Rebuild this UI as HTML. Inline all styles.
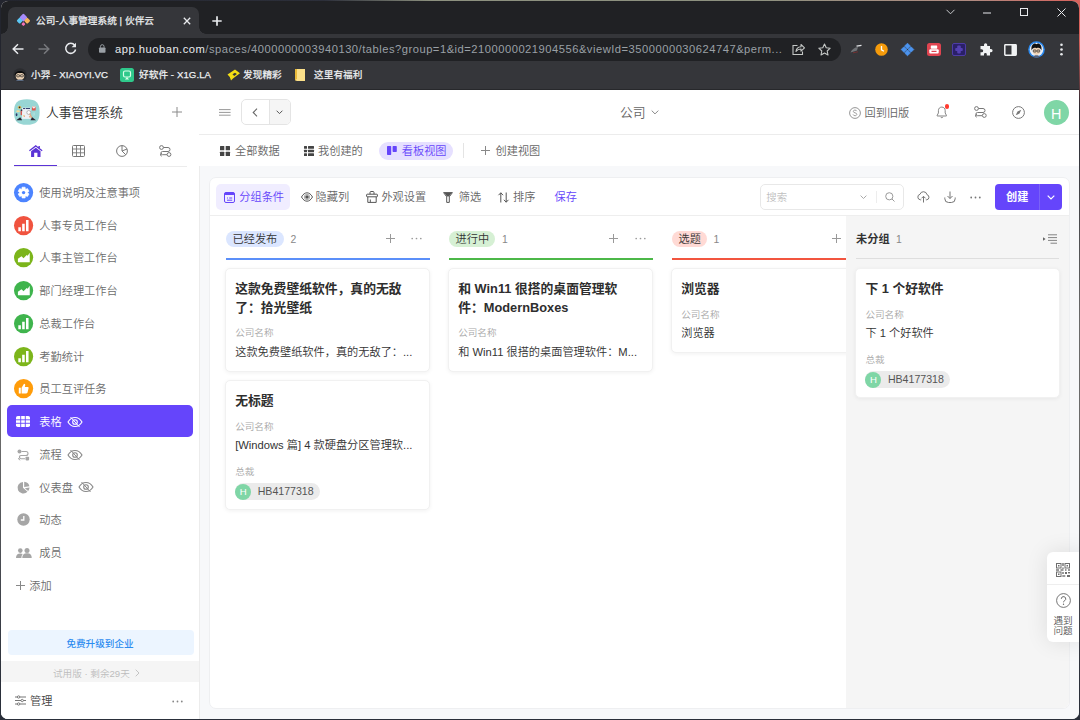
<!DOCTYPE html>
<html lang="zh-CN">
<head>
<meta charset="utf-8">
<title>公司-人事管理系统 | 伙伴云</title>
<style>
*{box-sizing:border-box;margin:0;padding:0}
html,body{width:1080px;height:720px;overflow:hidden;background:#3a3d47}
body{background:radial-gradient(circle at 100% 0,#d9625c 0,#d9625c 40px,rgba(217,98,92,0) 110px),linear-gradient(180deg,#23252e 0,#23252e 14%,#6b6b6b 45%,#6b6b6b 60%,#2a2f3a 95%)}
body{font-family:"Liberation Sans","Noto Sans CJK SC",sans-serif;color:#333;position:relative;font-weight:350}
.abs{position:absolute}
.t{position:absolute;white-space:nowrap;line-height:1;margin-top:1px}
svg{position:absolute;overflow:visible}
/* ---------- window ---------- */
#win{position:absolute;left:1px;top:1px;width:1078px;height:718px;border-radius:7px;overflow:hidden;background:#fff}
/* ---------- chrome ---------- */
#frame{position:absolute;left:0;top:0;width:1079px;height:33px;background:#202124}
#tab{position:absolute;left:7px;top:6px;width:191px;height:27px;background:#35363a;border-radius:7px 7px 0 0}
#tab:before,#tab:after{content:"";position:absolute;bottom:0;width:7px;height:7px;background:radial-gradient(circle at 0 0,rgba(0,0,0,0) 6.5px,#35363a 7px)}
#tab:before{left:-7px}
#tab:after{right:-7px;transform:scaleX(-1)}
#tbar{position:absolute;left:0;top:33px;width:1079px;height:56px;background:#35363a;z-index:5;border-bottom:1px solid #27282b}
#url{position:absolute;left:87px;top:3.500px;width:753px;height:23px;border-radius:12px;background:#202124}
.ct{color:#eef0f2;font-size:9.6px;margin-top:0;letter-spacing:.1px;font-weight:400;-webkit-text-stroke:.25px #eef0f2}
/* ---------- page ---------- */
#page{position:absolute;left:0;top:88px;width:1079px;height:630px;background:#f7f8fa}
#side{position:absolute;left:0;top:0;width:199px;height:630px;background:#fff;border-right:1px solid #ececec}
#head{position:absolute;left:198px;top:0;width:881px;height:46px;background:#fff;border-bottom:1px solid #ececec}
#views{position:absolute;left:198px;top:46px;width:881px;height:31px;background:#fff}
#panel{position:absolute;left:208px;top:88px;width:860.500px;height:532px;background:#fff;border:1px solid #eeeff1;border-radius:7px;overflow:hidden}
.si{color:#6c6c6c;font-size:11.2px}

.tb{font-size:11.200px;color:#666}
.card{position:absolute;background:#fff;border:1px solid #f1f1f1;border-radius:5px;box-shadow:0 1px 4px rgba(0,0,0,.06)}
.ttl{font-size:12.800px;font-weight:700;color:#2e2e2e}
.lab{font-size:9.600px;color:#a8a8a8}
.val{font-size:11.200px;color:#333}
.chip{position:absolute;height:17.400px;border-radius:8.700px;background:#ebebeb;padding-right:6px;white-space:nowrap;line-height:17px;font-size:0}
.chip i{display:inline-block;vertical-align:top;margin-top:.7px;width:16px;height:16px;border-radius:50%;background:#7fd6a6;color:#fff;font-style:normal;font-size:9.600px;line-height:16px;text-align:center;font-weight:400}
.chip b{display:inline-block;vertical-align:top;font-weight:400;font-size:10.600px;color:#555;margin-left:6.500px;line-height:17.500px}
</style>
</head>
<body>
<div class="abs" style="left:0;top:0;width:1080px;height:1px;background:linear-gradient(90deg,#23252e 0,#2c2f3a 30%,#8d917f 40%,#8d917f 70%,#b08a80 90%,#d9625c 100%)"></div>
<div id="win">
  <!-- ======= BROWSER CHROME ======= -->
  <div id="frame">
    <div id="tab">
      <svg style="left:9px;top:7px" width="13" height="13" viewBox="0 0 13 13">
        <rect x="3.4" y="0.6" width="6" height="6" rx="1.3" transform="rotate(45 6.4 3.6)" fill="#a78bfa"/>
        <rect x="0.4" y="4.4" width="4.6" height="4.6" rx="1.1" transform="rotate(45 2.7 6.7)" fill="#5cc8f5"/>
        <rect x="7.9" y="4.4" width="4.6" height="4.6" rx="1.1" transform="rotate(45 10.2 6.7)" fill="#f7b45c"/>
        <rect x="4.9" y="8.6" width="3" height="3" rx="0.9" transform="rotate(45 6.4 10.1)" fill="#f472b6"/>
      </svg>
      <span class="t ct" style="left:28px;top:9px">公司-人事管理系统 | 伙伴云</span>
      <svg style="left:175px;top:10px" width="8" height="8" viewBox="0 0 8 8"><path d="M.8.8l6.4 6.4M7.2.8L.8 7.2" stroke="#e8eaed" stroke-width="1.3" fill="none"/></svg>
    </div>
    <svg style="left:211px;top:15px" width="10" height="10" viewBox="0 0 10 10"><path d="M5 .3v9.400M.3 5h9.400" stroke="#e8eaed" stroke-width="1.700" fill="none"/></svg>
    <svg style="left:945px;top:8px" width="9" height="6" viewBox="0 0 9 6"><path d="M.5.8l4 4 4-4" stroke="#c8cacd" stroke-width="1" fill="none"/></svg>
    <svg style="left:982px;top:11px" width="8" height="2" viewBox="0 0 8 2"><path d="M0 1h8" stroke="#e8eaed" stroke-width="1.1"/></svg>
    <svg style="left:1019px;top:7px" width="8" height="8" viewBox="0 0 8 8"><rect x=".5" y=".5" width="7" height="7" stroke="#e8eaed" stroke-width="1" fill="none"/></svg>
    <svg style="left:1056px;top:7px" width="9" height="9" viewBox="0 0 9 9"><path d="M.5.5l8 8M8.500.5l-8 8" stroke="#e8eaed" stroke-width="1" fill="none"/></svg>
  </div>
  <div id="tbar">
    <!-- nav -->
    <svg style="left:11px;top:9px" width="12" height="12" viewBox="0 0 12 12"><path d="M11.500 6H1.400M6 1.200L1.200 6 6 10.800" stroke="#e8eaed" stroke-width="1.500" fill="none"/></svg>
    <svg style="left:37px;top:9px" width="12" height="12" viewBox="0 0 12 12"><path d="M.5 6h10.100M6 1.200L10.800 6 6 10.800" stroke="#77797d" stroke-width="1.500" fill="none"/></svg>
    <svg style="left:63px;top:8px" width="13" height="13" viewBox="0 0 13 13"><path d="M10.700 3.300A5 5 0 1 0 11.600 7.500" stroke="#e8eaed" stroke-width="1.500" fill="none"/><path d="M12 .8v4.400H7.600z" fill="#e8eaed"/></svg>
    <div id="url">
      <svg style="left:10.500px;top:6.800px" width="6.500" height="9" viewBox="0 0 8 11"><rect x="0" y="4.200" width="8" height="6.500" rx="1" fill="#9aa0a6"/><path d="M1.800 4.500V3a2.200 2.200 0 0 1 4.400 0v1.500" stroke="#9aa0a6" stroke-width="1.200" fill="none"/></svg>
      <span class="t" style="left:27px;top:5.500px;font-size:11.200px;color:#e8eaed;letter-spacing:.5px">app.huoban.com<span style="color:#9aa0a6">/spaces/4000000003940130/tables?group=1&amp;id=2100000021904556&amp;viewId=3500000030624747&amp;perm...</span></span>
      <svg style="left:704px;top:5px" width="13" height="12" viewBox="0 0 13 12"><path d="M5.500 2.500H1v9h9.500V8.500" stroke="#c4c7c5" stroke-width="1.100" fill="none"/><path d="M4 8.500c.3-3 2-4.500 5-4.700V1.500l3.500 3.300L9 8.200V6c-2.200 0-3.800.8-5 2.500z" stroke="#c4c7c5" stroke-width="1.100" fill="none" stroke-linejoin="round"/></svg>
      <svg style="left:730px;top:5px" width="13" height="13" viewBox="0 0 13 13"><path d="M6.500 1l1.700 3.700 4 .5-3 2.800.8 4-3.500-2-3.500 2 .8-4-3-2.800 4-.5z" stroke="#c4c7c5" stroke-width="1.100" fill="none" stroke-linejoin="round"/></svg>
    </div>
    <!-- extensions -->
    <svg style="left:849px;top:10px" width="12" height="10" viewBox="0 0 12 10"><path d="M.5 8.500C2 5 4.500 3.500 8 3l-1 3.500z" fill="#6f7276"/><path d="M6.500 2.200l5-.8" stroke="#e4e6e8" stroke-width="1.300" fill="none"/><path d="M3 8.800l5-1" stroke="#7a3030" stroke-width=".9"/></svg>
    <svg style="left:874px;top:9px" width="13" height="13" viewBox="0 0 13 13"><circle cx="6.500" cy="6.500" r="6.300" fill="#f59b0b"/><path d="M6.500 3v3.800l2.400 1.400" stroke="#fff" stroke-width="1.300" fill="none"/></svg>
    <svg style="left:900px;top:9px" width="13" height="13" viewBox="0 0 13 13"><g fill="#4b93ee" stroke="#4b93ee" stroke-width=".8" stroke-linejoin="round"><path d="M6.500 .2L9.300 3 6.500 6 3.700 3z"/><path d="M6.500 7L9.300 10 6.500 12.800 3.700 10z"/><path d="M.2 6.500L3 3.700 6 6.500 3 9.300z"/><path d="M12.800 6.500L10 3.700 7 6.500 10 9.300z"/></g></svg>
    <svg style="left:926px;top:9px" width="14" height="13" viewBox="0 0 14 13"><rect x="0" y="0" width="14" height="13" rx="2.500" fill="#e04450"/><rect x="3.800" y="2.500" width="6.400" height="3.200" rx=".6" fill="#fff"/><rect x="2.300" y="6.300" width="9.400" height="4.200" rx="1" fill="#fff"/><rect x="4.500" y="7.800" width="5" height="1.200" fill="#e04450"/></svg>
    <svg style="left:951px;top:9px" width="14" height="13" viewBox="0 0 14 13"><rect x=".5" y=".5" width="13" height="12" rx="1.500" fill="#2a2068" stroke="#4d3ba6" stroke-width="1"/><rect x="5.200" y="2.600" width="3.600" height="7.800" rx="1" fill="#5440b2"/><rect x="3.200" y="5" width="7.600" height="3" rx="1" fill="#5440b2"/></svg>
    <svg style="left:978px;top:9px" width="13" height="13" viewBox="0 0 13 13"><path d="M5 1.800a1.600 1.600 0 0 1 3.200 0V3H11v3h1a1.600 1.600 0 0 1 0 3.200h-1V12.500H7.800v-1.200a1.400 1.400 0 0 0-2.800 0v1.200H1.500V9.200h1.200a1.500 1.500 0 0 0 0-3H1.500V3H5z" fill="#f1f3f4"/></svg>
    <svg style="left:1003px;top:9.500px" width="13" height="12" viewBox="0 0 13 12"><rect x=".8" y=".8" width="11.400" height="10.400" rx=".6" fill="none" stroke="#f1f3f4" stroke-width="1.500"/><rect x="7.500" y="1" width="4.500" height="10" fill="#f1f3f4"/></svg>
    <svg style="left:1027px;top:7px" width="17" height="17" viewBox="0 0 17 17"><circle cx="8.500" cy="8.500" r="8.300" fill="#2b8af0"/><circle cx="8.500" cy="8.500" r="6.800" fill="#e9eef5"/><path d="M5.200 16c.5-2.500 6.100-2.500 6.600 0a8 8 0 0 1-6.600 0z" fill="#55617a"/><ellipse cx="8.500" cy="9.800" rx="3.700" ry="4" fill="#f0d3b4"/><path d="M3.600 9.500C2.500 3 7 1.500 8.500 3.200 10 1.500 14.500 3 13.400 9.500 12.500 7 11 6.300 8.500 7.200 6 6.300 4.500 7 3.600 9.500z" fill="#101010"/><rect x="5.300" y="9" width="2.700" height="2" rx=".5" fill="none" stroke="#1a1a1a" stroke-width=".7"/><rect x="9" y="9" width="2.700" height="2" rx=".5" fill="none" stroke="#1a1a1a" stroke-width=".7"/></svg>
    <svg style="left:1059px;top:9px" width="3" height="13" viewBox="0 0 3 13"><circle cx="1.500" cy="1.700" r="1.300" fill="#e8eaed"/><circle cx="1.500" cy="6.500" r="1.300" fill="#e8eaed"/><circle cx="1.500" cy="11.300" r="1.300" fill="#e8eaed"/></svg>
    <!-- bookmarks -->
    <svg style="left:12px;top:33.500px" width="14" height="14" viewBox="0 0 14 14"><circle cx="7" cy="7" r="6.800" fill="#2b2c2f"/><circle cx="7" cy="8" r="4.300" fill="#ecd2b4"/><path d="M1.800 7.500C1 1.500 13 1.500 12.200 7.500 11 5 9 4.500 7 5.200 5 4.500 3 5 1.800 7.500z" fill="#0d0d0d"/><rect x="3.700" y="6.800" width="2.800" height="2" rx=".5" fill="none" stroke="#222" stroke-width=".7"/><rect x="7.500" y="6.800" width="2.800" height="2" rx=".5" fill="none" stroke="#222" stroke-width=".7"/><path d="M3 13c1-2 7-2 8 0z" fill="#5a6a80"/></svg>
    <span class="t ct" style="left:30px;top:35.500px">小羿 - XIAOYI.VC</span>
    <svg style="left:119px;top:34px" width="14" height="14" viewBox="0 0 14 14"><rect width="14" height="14" rx="2.500" fill="#2fc98b"/><rect x="3.500" y="3" width="7" height="6" rx="1.500" fill="none" stroke="#d9ffe9" stroke-width="1.200"/><path d="M5 11.500l2-2.500 2 2.500" fill="#d9ffe9"/></svg>
    <span class="t ct" style="left:138px;top:35.500px">好软件 - X1G.LA</span>
    <svg style="left:226px;top:35px" width="14" height="12" viewBox="0 0 14 12"><path d="M.5 5.500L8 .5l5 3.800L6 9.500 4 11.500 2.800 8z" fill="#f3de14"/><path d="M5.500 5.200l2.500-1.500 1.800 1.300-2.600 1.900z" fill="#35363a"/></svg>
    <span class="t ct" style="left:242px;top:35.500px">发现精彩</span>
    <svg style="left:294px;top:35px" width="10" height="12" viewBox="0 0 10 12"><path d="M0 0h10v12H2a2 2 0 0 1-2-2z" fill="#fbe08a"/><path d="M0 0h2v10a1 1 0 0 0 0 2 2 2 0 0 1-2-2z" fill="#e8b93a"/></svg>
    <span class="t ct" style="left:313px;top:35.500px">这里有福利</span>
  </div>
  <!-- ======= PAGE ======= -->
  <div id="page">
    <div id="side">
<svg style="left:12.800px;top:10px" width="25.600" height="26" viewBox="0 0 26 26">
<path d="M13 0C22.500 0 26 3.500 26 13S22.500 26 13 26 0 22.500 0 13 3.500 0 13 0z" fill="#98d6d4"/>
<rect x="8.200" y="8.700" width="8.600" height="11.300" fill="#eef0f4"/>
<rect x="9.200" y="9" width="2.100" height="1" fill="#2c3a6b"/><rect x="12" y="9" width="4.300" height="1" fill="#2c3a6b"/>
<rect x="6.700" y="12" width="1.400" height="4.200" rx=".5" fill="#d9534f"/>
<circle cx="7.600" cy="11.200" r=".9" fill="#3a3040"/>
<circle cx="5.650" cy="8.250" r="1.700" fill="#e3bd55"/><circle cx="5.650" cy="8.250" r=".85" fill="#2a2a2a"/>
<ellipse cx="4.100" cy="12.200" rx="1.900" ry="1.100" fill="#f5dc9a"/>
<ellipse cx="2.600" cy="15.800" rx=".9" ry="1.500" fill="#2c3a6b"/>
<circle cx="15" cy="13.500" r="2" fill="#fafbfd" stroke="#a6a6a6" stroke-width=".8"/>
<path d="M16.300 15.200l1.600 3.300" stroke="#e3a57c" stroke-width="1.300" stroke-linecap="round"/>
<circle cx="16.100" cy="17.700" r="1" fill="#e8b08a"/>
<rect x="9.600" y="16" width=".9" height="1.600" fill="#f2c94c"/><rect x="10.300" y="16.800" width=".7" height=".9" fill="#d9534f"/>
<rect x="18.300" y="7.300" width="3.700" height="4.200" rx=".6" fill="#e0564f"/><path d="M18.300 7.900l1.850 1.700 1.850-1.700V7.300h-3.700z" fill="#f7f1ee"/>
<path d="M19.500 13.500v4M20.800 13.500v3" stroke="#c4e6e4" stroke-width=".5"/>
<path d="M2.300 21.300L6.300 18.400l2 2.900zM22.400 21.300l-4-2.900-1.700 2.900z" fill="#2a2230"/>
</svg>
<span class="t" style="left:45px;top:17px;font-size:12.800px;color:#333">人事管理系统</span>
<svg style="left:171px;top:18px" width="10" height="10" viewBox="0 0 10 10"><path d="M5 0v10M0 5h10" stroke="#8a8a8a" stroke-width="1"/></svg>
<svg style="left:27.700px;top:56px" width="13.600" height="12" viewBox="0 0 15 13"><path d="M7.500 0L0 5.800l.9 1L7.500 1.800l6.600 5 .9-1L12 3.500V1h-1.600v1.300z" fill="#5b33d6"/><path d="M2.300 6.800L7.500 2.900l5.200 3.900V13H9.300V8.500H5.700V13H2.300z" fill="#5b33d6"/></svg>
<svg style="left:71px;top:55.700px" width="13" height="12" viewBox="0 0 13 12"><rect x=".5" y=".5" width="12" height="11" rx="1" fill="none" stroke="#777" stroke-width="1"/><path d="M.5 4h12M.5 7.800h12M4.500 .5v11M8.500 .5v11" stroke="#777" stroke-width=".9" fill="none"/></svg>
<svg style="left:115px;top:55.700px" width="12" height="12" viewBox="0 0 12 12"><circle cx="6" cy="6" r="5.400" fill="none" stroke="#777" stroke-width="1"/><path d="M6 .6V6l3.800 3.800M6 6l5-2" stroke="#777" stroke-width="1" fill="none"/></svg>
<svg style="left:158px;top:55.700px" width="13" height="12" viewBox="0 0 13 12"><circle cx="2.500" cy="2.500" r="1.900" fill="none" stroke="#777" stroke-width="1"/><circle cx="10" cy="9.500" r="1.900" fill="none" stroke="#777" stroke-width="1"/><path d="M4.500 2.500H9a2 2 0 0 1 0 4H3.500a1.600 1.600 0 0 0 0 3.200H8" fill="none" stroke="#777" stroke-width="1"/><path d="M2.800 8.200L1 9.700l1.800 1.500" fill="none" stroke="#777" stroke-width="1"/></svg>
<div class="abs" style="left:13px;top:76.500px;width:173px;height:1px;background:#ececec"></div>
<div class="abs" style="left:13px;top:75.800px;width:43px;height:1.700px;background:#5b33d6"></div>
<div class="abs" style="left:-.2px;top:.6px;width:199px;height:0">
<svg style="left:13px;top:93.40px" width="19.200" height="19.200" viewBox="0 0 24 24"><circle cx="12" cy="12" r="12" fill="#4c84ff"/><path d="M9.86 7.37L10.07 5.27L13.93 5.27L14.14 7.37L14.93 7.83L16.86 6.96L18.79 10.31L17.08 11.54L17.08 12.46L18.79 13.69L16.86 17.04L14.93 16.17L14.14 16.63L13.93 18.73L10.07 18.73L9.86 16.63L9.07 16.17L7.14 17.04L5.21 13.69L6.92 12.46L6.92 11.54L5.21 10.31L7.14 6.96L9.07 7.83z" fill="#fff" stroke="#fff" stroke-width=".8" stroke-linejoin="round"/><circle cx="12" cy="12" r="2.100" fill="#4c84ff"/></svg>
<span class="t si" style="left:38.500px;top:97.40px">使用说明及注意事项</span>
<svg style="left:13px;top:126.14px" width="19.200" height="19.200" viewBox="0 0 24 24"><circle cx="12" cy="12" r="12" fill="#f0533f"/><path d="M5.400 14h3.200v5H5.400zM10.200 9.600h3.200V19h-3.200zM15 5h3.200v14H15z" fill="#fff"/></svg>
<span class="t si" style="left:38.500px;top:130.14px">人事专员工作台</span>
<svg style="left:13px;top:158.88px" width="19.200" height="19.200" viewBox="0 0 24 24"><circle cx="12" cy="12" r="12" fill="#7cb51b"/><path d="M4.900 17.800V13.600L9.400 10.400l2.500 2.500 4-4.200 1.200 1.100 2.600-3.800V17.800z" fill="#fff"/></svg>
<span class="t si" style="left:38.500px;top:162.88px">人事主管工作台</span>
<svg style="left:13px;top:191.62px" width="19.200" height="19.200" viewBox="0 0 24 24"><circle cx="12" cy="12" r="12" fill="#3fb44d"/><path d="M4.900 17.800V13.600L9.400 10.400l2.500 2.500 4-4.200 1.200 1.100 2.600-3.800V17.800z" fill="#fff"/></svg>
<span class="t si" style="left:38.500px;top:195.62px">部门经理工作台</span>
<svg style="left:13px;top:224.36px" width="19.200" height="19.200" viewBox="0 0 24 24"><circle cx="12" cy="12" r="12" fill="#3fb44d"/><path d="M5.400 14h3.200v5H5.400zM10.200 9.600h3.200V19h-3.200zM15 5h3.200v14H15z" fill="#fff"/></svg>
<span class="t si" style="left:38.500px;top:228.36px">总裁工作台</span>
<svg style="left:13px;top:257.10px" width="19.200" height="19.200" viewBox="0 0 24 24"><circle cx="12" cy="12" r="12" fill="#7cb51b"/><path d="M5.400 14h3.200v5H5.400zM10.200 9.600h3.200V19h-3.200zM15 5h3.200v14H15z" fill="#fff"/></svg>
<span class="t si" style="left:38.500px;top:261.10px">考勤统计</span>
<svg style="left:13px;top:289.84px" width="19.200" height="19.200" viewBox="0 0 24 24"><circle cx="12" cy="12" r="12" fill="#ff9c0a"/><path d="M6 11h2.500v7H6zM9.500 11l3-5c1.200 0 1.800.9 1.500 2l-.5 2H17c.9 0 1.400.7 1.200 1.500l-1.200 5c-.2.900-.8 1.500-1.700 1.500H9.500z" fill="#fff"/></svg>
<span class="t si" style="left:38.500px;top:293.84px">员工互评任务</span>
<div class="abs" style="left:6.200px;top:315.28px;width:186px;height:31.800px;border-radius:5px;background:#6545fb"></div>
<svg style="left:15px;top:326.68px" width="14" height="11" viewBox="0 0 14 11"><rect width="14" height="11" rx="1.800" fill="#fff"/><path d="M0 3.800h14M0 7.300h14M4.700 0v11M9.300 0v11" stroke="#6545fb" stroke-width=".9"/></svg>
<span class="t" style="left:38.500px;top:326.58px;font-size:11.200px;color:#fff">表格</span>
<svg style="left:66px;top:326.18px" width="16" height="12" viewBox="0 0 16 12"><path d="M1 6C3 2.500 6 1.500 8 1.500S13 2.500 15 6c-2 3.500-5 4.500-7 4.500S3 9.500 1 6z" fill="none" stroke="#fff" stroke-width="1.100"/><circle cx="8" cy="6" r="2.300" fill="none" stroke="#fff" stroke-width="1.100"/><path d="M3.500 1L12.500 11" stroke="#fff" stroke-width="1"/></svg>
<svg style="left:16px;top:358.92px" width="13" height="12" viewBox="0 0 13 12"><circle cx="2.500" cy="2.500" r="2" fill="#a6a6a6"/><rect x="8.500" y="7.800" width="3.600" height="3.600" rx=".8" fill="#a6a6a6"/><path d="M4.500 2.500H9a2 2 0 0 1 0 4H4a1.600 1.600 0 0 0 0 3.200h4" fill="none" stroke="#a6a6a6" stroke-width="1.100"/><path d="M3.200 8.200L1.300 9.700l1.900 1.500" fill="none" stroke="#a6a6a6" stroke-width="1"/></svg>
<span class="t si" style="left:38.500px;top:359.32px">流程</span>
<svg style="left:66px;top:358.92px" width="16" height="12" viewBox="0 0 16 12"><path d="M1 6C3 2.500 6 1.500 8 1.500S13 2.500 15 6c-2 3.500-5 4.500-7 4.500S3 9.500 1 6z" fill="none" stroke="#888" stroke-width="1.100"/><circle cx="8" cy="6" r="2.300" fill="none" stroke="#888" stroke-width="1.100"/><path d="M3.500 1L12.500 11" stroke="#888" stroke-width="1"/></svg>
<svg style="left:16px;top:391.16px" width="13" height="13" viewBox="0 0 13 13"><path d="M6 1A5.800 5.800 0 1 0 10.500 10.800L6 6.800z" fill="#a6a6a6"/><path d="M7.200 .8A5.800 5.800 0 0 1 12.400 5.200L7.200 6z" fill="#a6a6a6"/><path d="M7.800 7.300l4.700-.8a5.800 5.800 0 0 1-1.300 3.500z" fill="#a6a6a6"/></svg>
<span class="t si" style="left:38.500px;top:392.06px">仪表盘</span>
<svg style="left:77px;top:391.66px" width="16" height="12" viewBox="0 0 16 12"><path d="M1 6C3 2.500 6 1.500 8 1.500S13 2.500 15 6c-2 3.500-5 4.500-7 4.500S3 9.500 1 6z" fill="none" stroke="#888" stroke-width="1.100"/><circle cx="8" cy="6" r="2.300" fill="none" stroke="#888" stroke-width="1.100"/><path d="M3.500 1L12.500 11" stroke="#888" stroke-width="1"/></svg>
<svg style="left:16px;top:423.90px" width="13" height="13" viewBox="0 0 13 13"><circle cx="6.500" cy="6.500" r="6.200" fill="#a6a6a6"/><path d="M6.800 3v4H3.800" stroke="#fff" stroke-width="1.300" fill="none"/></svg>
<span class="t si" style="left:38.500px;top:424.80px">动态</span>
<svg style="left:15px;top:458.14px" width="16" height="10" viewBox="0 0 16 10"><circle cx="4.300" cy="2.600" r="2.300" fill="#a6a6a6"/><circle cx="11" cy="2.500" r="2.500" fill="#a6a6a6"/><path d="M0 10c0-3.200 1.800-4.600 4.300-4.600 1 0 1.800.200 2.500.700C5.800 7 5.400 8.300 5.400 10z" fill="#a6a6a6"/><path d="M6.300 10c0-3.400 2-4.800 4.700-4.800s4.700 1.400 4.700 4.800z" fill="#a6a6a6"/></svg>
<span class="t si" style="left:38.500px;top:457.54px">成员</span>
<svg style="left:15px;top:491.38px" width="9" height="9" viewBox="0 0 9 9"><path d="M4.500 0v9M0 4.500h9" stroke="#888" stroke-width="1"/></svg>
<span class="t si" style="left:28.500px;top:490.28px">添加</span>
</div>
<div class="abs" style="left:6.500px;top:540.500px;width:186px;height:25.500px;border-radius:4px;background:#ecf5ff"></div>
<span class="t" style="left:0;width:198px;text-align:center;top:548.500px;font-size:9.600px;color:#2d8cf0;font-weight:500">免费升级到企业</span>
<div class="abs" style="left:0;top:572.300px;width:198px;height:20.500px;background:#f5f5f5"></div>
<span class="t" style="left:52px;top:578.500px;font-size:9.600px;color:#bdbdbd">试用版 · 剩余29天</span>
<svg style="left:134px;top:579.500px" width="5" height="8" viewBox="0 0 5 8"><path d="M.7.700l3.300 3.300-3.300 3.300" stroke="#c4c4c4" stroke-width="1" fill="none"/></svg>
<svg style="left:14px;top:606px" width="11" height="11" viewBox="0 0 11 11"><path d="M0 2h11M0 5.500h11M0 9h11" stroke="#666" stroke-width=".9"/><circle cx="3.600" cy="2" r="1.200" fill="#fff" stroke="#666" stroke-width=".8"/><circle cx="7.200" cy="5.500" r="1.200" fill="#fff" stroke="#666" stroke-width=".8"/><circle cx="3.600" cy="9" r="1.200" fill="#fff" stroke="#666" stroke-width=".8"/></svg>
<span class="t" style="left:29px;top:606px;font-size:11.200px;color:#444">管理</span>
<svg style="left:171px;top:611px" width="11" height="3" viewBox="0 0 11 3"><circle cx="1.200" cy="1.500" r=".9" fill="#888"/><circle cx="5.500" cy="1.500" r=".9" fill="#888"/><circle cx="9.800" cy="1.500" r=".9" fill="#888"/></svg>
</div>
    <div id="head"></div>
<svg style="left:218.200px;top:19.800px" width="11.600" height="7" viewBox="0 0 11.600 7"><path d="M0 .6h11.600M0 3.400h11.600M0 6.200h11.600" stroke="#999" stroke-width="1"/></svg>
<div class="abs" style="left:240px;top:10.300px;width:49.500px;height:25.400px;border:1px solid #e4e4e4;border-radius:5px;background:#fff;overflow:hidden"><div class="abs" style="left:27px;top:0;width:22px;height:24px;background:#f5f5f5;border-left:1px solid #e4e4e4"></div></div>
<svg style="left:251px;top:19px" width="6" height="9" viewBox="0 0 6 9"><path d="M5 .700L1.200 4.500 5 8.300" stroke="#666" stroke-width="1.100" fill="none"/></svg>
<svg style="left:275px;top:21px" width="7" height="5" viewBox="0 0 7 5"><path d="M.6.700l2.900 2.900L6.400.700" stroke="#555" stroke-width="1" fill="none"/></svg>
<span class="t" style="left:619px;top:17px;font-size:12.800px;color:#666">公司</span>
<svg style="left:650px;top:21px" width="8" height="5" viewBox="0 0 8 5"><path d="M.700.600l3.300 3.300L7.300.600" stroke="#888" stroke-width="1" fill="none"/></svg>
<svg style="left:847.5px;top:17.5px" width="12" height="12" viewBox="0 0 12 12"><circle cx="6" cy="6" r="5.400" fill="none" stroke="#8a8a8a" stroke-width=".9"/><path d="M7.800 4.200C7.500 3.400 6.800 3.100 6 3.100c-1 0-1.700.5-1.700 1.300 0 1.900 3.500.9 3.500 2.900 0 .9-.8 1.400-1.800 1.400-.9 0-1.700-.4-2-1.300" fill="none" stroke="#8a8a8a" stroke-width=".8"/></svg>
<span class="t" style="left:863.5px;top:18px;font-size:11.200px;color:#666">回到旧版</span>
<svg style="left:935.200px;top:16.800px" width="11.600" height="12.500" viewBox="0 0 13 14"><path d="M6.500 1.200c-2.300 0-3.800 1.700-3.800 4v2.600L1.300 10.500v.7h10.400v-.7L10.300 7.800V5.200c0-2.300-1.500-4-3.800-4zM5.200 12.200a1.400 1.400 0 0 0 2.600 0" fill="none" stroke="#777" stroke-width="1" stroke-linejoin="round"/></svg>
<div class="abs" style="left:943.6px;top:15.299999999999997px;width:4.800px;height:4.800px;border-radius:50%;background:#ff3b30"></div>
<svg style="left:972.5px;top:17px" width="13" height="12" viewBox="0 0 13 12"><circle cx="2.500" cy="2.500" r="1.900" fill="none" stroke="#777" stroke-width="1"/><circle cx="10.300" cy="9.500" r="1.900" fill="none" stroke="#777" stroke-width="1"/><path d="M4.500 2.500H9a2 2 0 0 1 0 4H3.500a1.600 1.600 0 0 0 0 3.200H8" fill="none" stroke="#777" stroke-width="1"/><path d="M2.800 8.200L1 9.700l1.800 1.500" fill="none" stroke="#777" stroke-width="1"/></svg>
<svg style="left:1010.5px;top:16.5px" width="13" height="13" viewBox="0 0 13 13"><circle cx="6.500" cy="6.500" r="5.900" fill="none" stroke="#777" stroke-width="1"/><path d="M9.300 3.700L7.500 7.500 3.700 9.300 5.500 5.500z" fill="#777"/></svg>
<div class="abs" style="left:1042.5px;top:10.5px;width:25.600px;height:25.600px;border-radius:50%;background:#7fd6a6"></div>
<span class="t" style="left:1042.5px;width:25.600px;text-align:center;top:16.5px;font-size:14.400px;color:#fff">H</span>
<div id="views"></div>
<svg style="left:219px;top:56.5px" width="10" height="10" viewBox="0 0 10 10"><rect x="0" y="0" width="4.300" height="4.300" rx=".6" fill="#444"/><rect x="5.700" y="0" width="4.300" height="4.300" rx=".6" fill="#444"/><rect x="0" y="5.700" width="4.300" height="4.300" rx=".6" fill="#444"/><rect x="5.700" y="5.700" width="4.300" height="4.300" rx=".6" fill="#444"/></svg>
<span class="t" style="left:234px;top:56px;font-size:11.200px;color:#666">全部数据</span>
<svg style="left:302.5px;top:56.5px" width="10" height="10" viewBox="0 0 10 10"><rect x="0" y="0" width="3" height="2.700" rx=".5" fill="#444"/><rect x="4" y="0" width="6" height="2.700" rx=".5" fill="#444"/><rect x="0" y="3.650" width="3" height="2.700" rx=".5" fill="#444"/><rect x="4" y="3.650" width="6" height="2.700" rx=".5" fill="#444"/><rect x="0" y="7.300" width="3" height="2.700" rx=".5" fill="#444"/><rect x="4" y="7.300" width="6" height="2.700" rx=".5" fill="#444"/></svg>
<span class="t" style="left:317px;top:56px;font-size:11.200px;color:#666">我创建的</span>
<div class="abs" style="left:378px;top:52.5px;width:74px;height:18.500px;border-radius:9.300px;background:#e6e0ff"></div>
<svg style="left:386px;top:57px" width="10" height="9" viewBox="0 0 10 9"><rect x="0" y="0" width="4.200" height="9" rx=".7" fill="#6545fb"/><rect x="5.600" y="0" width="4.200" height="6" rx=".7" fill="#6545fb"/></svg>
<span class="t" style="left:400.8px;top:56px;font-size:11.200px;color:#6545fb">看板视图</span>
<div class="abs" style="left:462px;top:54px;width:1px;height:15px;background:#e4e4e4"></div>
<svg style="left:480px;top:57px" width="9" height="9" viewBox="0 0 9 9"><path d="M4.500 0v9M0 4.500h9" stroke="#888" stroke-width="1"/></svg>
<span class="t" style="left:494.5px;top:56px;font-size:11.200px;color:#666">创建视图</span>
    <div id="panel">
<div class="abs" style="left:635.5px;top:38px;width:224.5px;height:493px;background:#f5f5f5"></div>
<div class="abs" style="left:0;top:37px;width:861px;height:1px;background:#eeeeee"></div>
<div class="abs" style="left:6px;top:6px;width:74px;height:25.500px;border-radius:5px;background:#f0edff"></div>
<svg style="left:13.5px;top:13.5px" width="11" height="11" viewBox="0 0 11 11"><rect x=".5" y=".5" width="10" height="10" rx="1.500" fill="none" stroke="#6545fb" stroke-width="1"/><rect x=".5" y=".5" width="10" height="2.600" rx="1" fill="#6545fb"/><path d="M3 6h1M5.200 6h3M3 8.200h5.200" stroke="#6545fb" stroke-width="1"/></svg>
<span class="t" style="left:29.3px;top:13.4px;font-size:11.200px;color:#6545fb">分组条件</span>
<svg style="left:90.5px;top:14px" width="12" height="10" viewBox="0 0 12 10"><path d="M.5 5C2 2.200 4 .8 6 .8S10 2.200 11.500 5C10 7.800 8 9.200 6 9.200S2 7.800 .5 5z" fill="none" stroke="#555" stroke-width="1"/><circle cx="6" cy="5" r="2.700" fill="none" stroke="#777" stroke-width=".6"/><circle cx="6" cy="5" r="1.800" fill="#555"/></svg>
<span class="t tb" style="left:105.6px;top:13.4px">隐藏列</span>
<svg style="left:156px;top:13px" width="12" height="12" viewBox="0 0 12 12"><path d="M4 3.200V1.500a1 1 0 0 1 1-1h2a1 1 0 0 1 1 1v1.700" fill="none" stroke="#555" stroke-width="1"/><rect x=".6" y="3.200" width="10.800" height="2.600" rx=".6" fill="none" stroke="#555" stroke-width="1"/><path d="M1.800 5.800v5.600h8.400V5.800M4.300 11.400V8.500" fill="none" stroke="#555" stroke-width="1"/></svg>
<span class="t tb" style="left:171.4px;top:13.4px">外观设置</span>
<svg style="left:233.3px;top:13.5px" width="10" height="11" viewBox="0 0 10 11"><path d="M.6.600h8.800L6.300 4.800v5.600H3.700V4.800z" fill="none" stroke="#555" stroke-width="1" stroke-linejoin="round"/><path d="M1.500 1h7L6 4.500H4z" fill="#555"/></svg>
<span class="t tb" style="left:248.7px;top:13.4px">筛选</span>
<svg style="left:287.5px;top:13.5px" width="11" height="11" viewBox="0 0 11 11"><path d="M2.800 10.500V.8M.500 3.200L2.800.8l2.300 2.400M8.200.500v9.700M5.900 7.800l2.300 2.400 2.300-2.400" fill="none" stroke="#555" stroke-width="1"/></svg>
<span class="t tb" style="left:303px;top:13.4px">排序</span>
<span class="t" style="left:344.5px;top:13.4px;font-size:11.200px;color:#6545fb">保存</span>
<div class="abs" style="left:549.5px;top:6px;width:144px;height:25.500px;border:1px solid #e8e8e8;border-radius:5px"></div>
<span class="t" style="left:556.3px;top:13.6px;font-size:10.400px;color:#bfbfbf">搜索</span>
<svg style="left:650px;top:16.5px" width="7" height="5" viewBox="0 0 7 5"><path d="M.6.600l2.900 2.900L6.400.600" stroke="#aaa" stroke-width="1" fill="none"/></svg>
<div class="abs" style="left:666px;top:13px;width:1px;height:12px;background:#ededed"></div>
<svg style="left:675px;top:14px" width="10" height="10" viewBox="0 0 10 10"><circle cx="4.300" cy="4.300" r="3.600" fill="none" stroke="#9a9a9a" stroke-width="1"/><path d="M7 7l2.500 2.500" stroke="#9a9a9a" stroke-width="1"/></svg>
<svg style="left:707px;top:13px" width="13" height="12" viewBox="0 0 13 12"><path d="M4.200 8.800H3.300A2.800 2.800 0 0 1 3 3.300 3.600 3.600 0 0 1 10 3.700a2.600 2.600 0 0 1-.3 5.100H8.800" fill="none" stroke="#757575" stroke-width="1"/><path d="M6.500 11.500V5.500M4.500 7.300l2-2 2 2" fill="none" stroke="#757575" stroke-width="1"/></svg>
<svg style="left:733.5px;top:13px" width="12" height="12" viewBox="0 0 12 12"><path d="M6 .5v7M3.500 5l2.500 2.500L8.500 5" fill="none" stroke="#757575" stroke-width="1"/><path d="M.8 6.500v1.200a3.800 3.800 0 0 0 3.800 3.800h2.800a3.800 3.800 0 0 0 3.800-3.800V6.500" fill="none" stroke="#757575" stroke-width="1"/></svg>
<svg style="left:760px;top:17.7px" width="11" height="3" viewBox="0 0 11 3"><circle cx="1.200" cy="1.500" r=".9" fill="#777"/><circle cx="5.500" cy="1.500" r=".9" fill="#777"/><circle cx="9.800" cy="1.500" r=".9" fill="#777"/></svg>
<div class="abs" style="left:785.3px;top:6px;width:66.700px;height:25.500px;border-radius:4px;background:#6545fb;overflow:hidden"><div class="abs" style="left:44.200px;top:0;width:1px;height:26px;background:#7a62f7"></div></div>
<span class="t" style="left:796px;top:13.4px;font-size:11.200px;color:#fff;font-weight:700">创建</span>
<svg style="left:837px;top:16.5px" width="8" height="5" viewBox="0 0 8 5"><path d="M.700.600l3.300 3.300L7.300.600" stroke="#fff" stroke-width="1.200" fill="none"/></svg>
<div class="abs" style="left:0;top:0;width:636px;height:531px;overflow:hidden">
<div class="abs" style="left:16px;top:53px;width:57.5px;height:16px;border-radius:8px;background:#dbe6ff"></div>
<span class="t" style="left:22.5px;top:55.4px;font-size:11.200px;color:#333">已经发布</span>
<span class="t" style="left:80.5px;top:56px;font-size:10.400px;color:#888">2</span>
<svg style="left:176.2px;top:56.2px" width="9" height="9" viewBox="0 0 9 9"><path d="M4.500 0v9M0 4.500h9" stroke="#999" stroke-width="1"/></svg>
<svg style="left:201.2px;top:59.2px" width="11" height="3" viewBox="0 0 11 3"><circle cx="1.200" cy="1.500" r=".85" fill="#999"/><circle cx="5.500" cy="1.500" r=".85" fill="#999"/><circle cx="9.800" cy="1.500" r=".85" fill="#999"/></svg>
<div class="abs" style="left:16px;top:80px;width:204px;height:1.800px;background:#5b8ff9"></div>
<div class="abs" style="left:239px;top:53px;width:46px;height:16px;border-radius:8px;background:#d6f0d4"></div>
<span class="t" style="left:245.5px;top:55.4px;font-size:11.200px;color:#333">进行中</span>
<span class="t" style="left:292px;top:56px;font-size:10.400px;color:#888">1</span>
<svg style="left:399.0px;top:56.2px" width="9" height="9" viewBox="0 0 9 9"><path d="M4.500 0v9M0 4.500h9" stroke="#999" stroke-width="1"/></svg>
<svg style="left:424.5px;top:59.2px" width="11" height="3" viewBox="0 0 11 3"><circle cx="1.200" cy="1.500" r=".85" fill="#999"/><circle cx="5.500" cy="1.500" r=".85" fill="#999"/><circle cx="9.800" cy="1.500" r=".85" fill="#999"/></svg>
<div class="abs" style="left:239px;top:80px;width:204px;height:1.800px;background:#4cb848"></div>
<div class="abs" style="left:462px;top:53px;width:34.5px;height:16px;border-radius:8px;background:#ffdad5"></div>
<span class="t" style="left:468.5px;top:55.4px;font-size:11.200px;color:#333">选题</span>
<span class="t" style="left:503.5px;top:56px;font-size:10.400px;color:#888">1</span>
<svg style="left:621.9px;top:56.2px" width="9" height="9" viewBox="0 0 9 9"><path d="M4.500 0v9M0 4.500h9" stroke="#999" stroke-width="1"/></svg>
<svg style="left:646.5px;top:59.2px" width="11" height="3" viewBox="0 0 11 3"><circle cx="1.200" cy="1.500" r=".85" fill="#999"/><circle cx="5.500" cy="1.500" r=".85" fill="#999"/><circle cx="9.800" cy="1.500" r=".85" fill="#999"/></svg>
<div class="abs" style="left:462px;top:80px;width:188px;height:1.800px;background:#f2553f"></div>
<div class="card" style="left:15.2px;top:90.3px;width:205px;height:103.8px">
<span class="t ttl" style="left:9px;top:12.90px">这款免费壁纸软件，真的无敌</span>
<span class="t ttl" style="left:9px;top:31.40px">了：拾光壁纸</span>
<span class="t lab" style="left:9px;top:58.00px">公司名称</span>
<span class="t val" style="left:9px;top:76.50px">这款免费壁纸软件，真的无敌了：...</span>
</div>
<div class="card" style="left:15.2px;top:202.3px;width:205px;height:129.8px">
<span class="t ttl" style="left:9px;top:12.90px">无标题</span>
<span class="t lab" style="left:9px;top:39.50px">公司名称</span>
<span class="t val" style="left:9px;top:58.00px">[Windows 篇] 4 款硬盘分区管理软...</span>
<span class="t lab" style="left:9px;top:84.30px">总裁</span>
<div class="chip" style="left:9px;top:101.60px"><i>H</i><b>HB4177318</b></div>
</div>
<div class="card" style="left:238.2px;top:90.3px;width:205px;height:103.8px">
<span class="t ttl" style="left:9px;top:12.90px">和 Win11 很搭的桌面管理软</span>
<span class="t ttl" style="left:9px;top:31.40px">件：ModernBoxes</span>
<span class="t lab" style="left:9px;top:58.00px">公司名称</span>
<span class="t val" style="left:9px;top:76.50px">和 Win11 很搭的桌面管理软件：M...</span>
</div>
<div class="card" style="left:461.2px;top:90.3px;width:205px;height:84.6px">
<span class="t ttl" style="left:9px;top:12.90px">浏览器</span>
<span class="t lab" style="left:9px;top:39.50px">公司名称</span>
<span class="t val" style="left:9px;top:58.00px">浏览器</span>
</div>
</div>
<span class="t" style="left:646px;top:55.4px;font-size:11.200px;color:#333;font-weight:700">未分组</span>
<span class="t" style="left:686px;top:56px;font-size:10.400px;color:#888">1</span>
<svg style="left:832.5px;top:56px" width="14" height="10" viewBox="0 0 14 10"><path d="M0 3.200l2.600 1.800L0 6.800z" fill="#666"/><path d="M5 .8h9M5 3.600h9M5 6.400h9M7.500 9.200H14" stroke="#777" stroke-width=".9"/></svg>
<div class="abs" style="left:646px;top:80.2px;width:203px;height:1px;background:#dedede"></div>
<div class="card" style="left:645.4px;top:90.3px;width:204.6px;height:129.8px">
<span class="t ttl" style="left:9px;top:12.90px">下 1 个好软件</span>
<span class="t lab" style="left:9px;top:39.50px">公司名称</span>
<span class="t val" style="left:9px;top:58.00px">下 1 个好软件</span>
<span class="t lab" style="left:9px;top:84.30px">总裁</span>
<div class="chip" style="left:9px;top:101.60px"><i>H</i><b>HB4177318</b></div>
</div>
</div>
<div class="abs" style="left:1046px;top:463px;width:40px;height:90px;border-radius:6px 0 0 6px;background:#fff;box-shadow:0 0 22px rgba(0,0,0,.10)"></div>
<svg style="left:1055px;top:473.5px" width="14" height="14" viewBox="0 0 14 14"><g fill="none" stroke="#6e6e6e" stroke-width="1"><rect x=".5" y=".5" width="4.500" height="4.500"/><rect x="9" y=".5" width="4.500" height="4.500"/><rect x=".5" y="9" width="4.500" height="4.500"/></g><g fill="#6e6e6e"><rect x="2" y="2" width="1.500" height="1.500"/><rect x="10.500" y="2" width="1.500" height="1.500"/><rect x="2" y="10.500" width="1.500" height="1.500"/><rect x="6.300" y="0" width="1.400" height="3"/><rect x="6.300" y="4.500" width="1.400" height="1.400"/><rect x="0" y="6.300" width="3" height="1.400"/><rect x="4.500" y="6.300" width="3" height="1.400"/><rect x="9" y="6.300" width="1.500" height="1.400"/><rect x="12" y="6.300" width="2" height="1.400"/><rect x="6.300" y="9" width="1.400" height="2"/><rect x="9" y="9" width="2" height="2"/><rect x="12" y="9" width="2" height="1.400"/><rect x="6.300" y="12.300" width="3" height="1.400"/><rect x="11" y="12" width="3" height="2"/></g></svg>
<div class="abs" style="left:1046px;top:495px;width:33px;height:1px;background:#eee"></div>
<svg style="left:1054.5px;top:504px" width="15" height="15" viewBox="0 0 15 15"><circle cx="7.500" cy="7.500" r="6.900" fill="none" stroke="#666" stroke-width=".9"/><path d="M5.300 5.800a2.200 2.200 0 1 1 3.300 1.900c-.7.400-1.100.8-1.100 1.600" fill="none" stroke="#666" stroke-width="1"/><circle cx="7.500" cy="11.200" r=".7" fill="#666"/></svg>
<span class="t" style="left:1052.4px;top:525.8px;font-size:9.600px;color:#555">遇到</span>
<span class="t" style="left:1052.4px;top:536.3px;font-size:9.600px;color:#555">问题</span>
  </div>
</div>
</body>
</html>
